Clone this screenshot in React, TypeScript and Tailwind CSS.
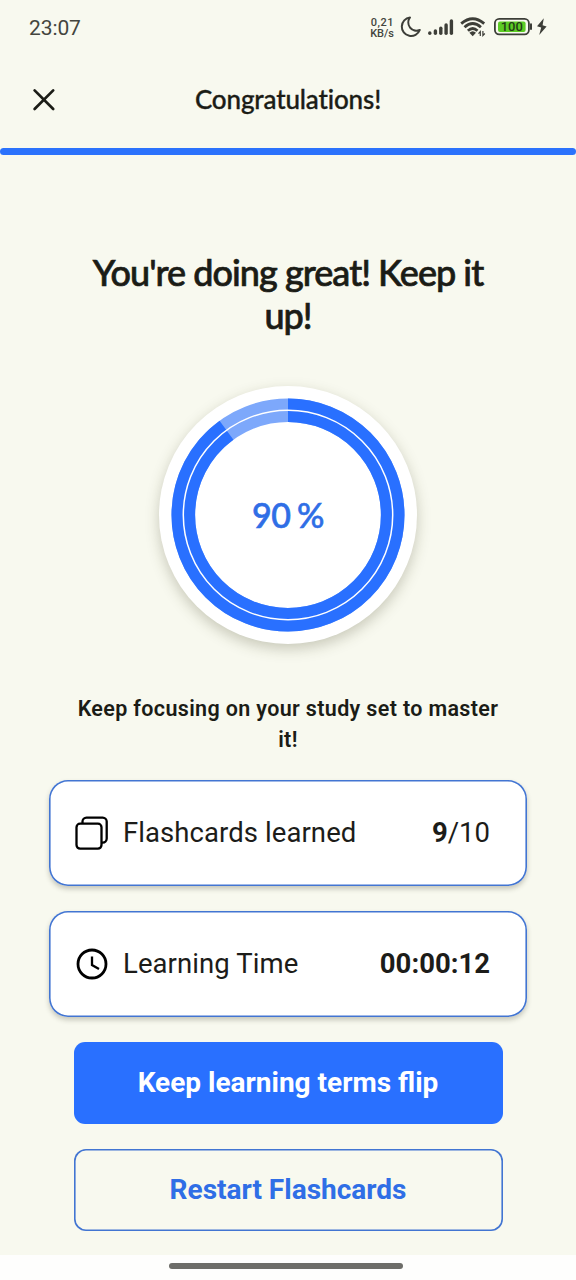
import type { ReactNode } from "react";

function StatusIcons() {
  return (
    <svg width="184" height="30" viewBox="368 12 184 30" fill="none" aria-hidden="true">
      <path
        d="M409.2 17.3 A9.3 9.3 0 1 0 419 29.8 A8.2 8.2 0 0 1 409.2 17.3 Z"
        stroke="#3d3e38"
        strokeWidth="2"
        strokeLinejoin="round"
        transform="translate(0.8 0.2)"
      />
      <g stroke="#3d3e38" strokeWidth="3.4" strokeLinecap="round">
        <path d="M429.8 33V33.2" />
        <path d="M435.4 31V33.2" />
        <path d="M440.8 28.2V33.2" />
        <path d="M446.1 25V33.2" />
        <path d="M451.4 21V33.2" />
      </g>
      <g stroke="#3d3e38" strokeWidth="2.8">
        <path d="M461.2 23.6 Q472.7 13.8 484.2 23.6" />
        <path d="M464.5 27.3 Q472.7 19.8 480.9 27.3" />
        <path d="M467.9 30.7 Q472.7 26.2 477.5 30.7" />
      </g>
      <path d="M469.4 32.8 Q472.7 29.8 476 32.8 L472.7 36.2 Z" fill="#3d3e38" />
      <path d="M480.3 36V31.6L478.5 33.6M482.9 31V35.5L484.8 33.5" stroke="#3d3e38" strokeWidth="1.2" />
      <rect x="494.9" y="18.8" width="34" height="15.6" rx="4.3" stroke="#3d3e38" strokeWidth="1.8" />
      <rect x="498" y="21.4" width="27.6" height="10.6" rx="2" fill="#5ccc24" />
      <path d="M531 24.2V29" stroke="#3d3e38" strokeWidth="2" strokeLinecap="round" />
      <path d="M543.8 18.2 L537 26.2 L541.2 27.6 L539.2 35 L546.6 26.6 L542.6 25.2 Z" fill="#3d3e38" />
      <text
        x="511.8"
        y="31.4"
        textAnchor="middle"
        textLength="22"
        fill="#243c18"
        className="font-['Roboto',sans-serif] text-[13px] font-medium"
      >
        100
      </text>
    </svg>
  );
}

function ScoreRing({ percent }: { percent: number }) {
  return (
    <div className="grid h-[258px] w-[258px] place-items-center rounded-full bg-white shadow-[0_5px_14px_rgba(60,60,30,0.26)]">
      <svg width="258" height="258" viewBox="0 0 258 258" fill="none" className="col-start-1 row-start-1" aria-hidden="true">
        <circle cx="129" cy="129" r="104.7" stroke="#7da8fb" strokeWidth="23.6" />
        <circle
          cx="129"
          cy="129"
          r="104.7"
          stroke="#2970ff"
          strokeWidth="23.6"
          pathLength="100"
          strokeDasharray={`${percent} 100`}
          transform="rotate(-90 129 129)"
        />
        <circle cx="129" cy="129" r="104.7" stroke="#ffffff" strokeWidth="1.5" />
      </svg>
      <span className="col-start-1 row-start-1 font-['Lato',sans-serif] text-[34px] leading-none font-medium tracking-[-0.3px] [word-spacing:-2px] whitespace-nowrap text-[#2f6ee6] [-webkit-text-stroke:0.6px_#2f6ee6]">
        {percent} %
      </span>
    </div>
  );
}

function StatCard({ icon, label, children }: { icon: ReactNode; label: string; children: ReactNode }) {
  return (
    <div className="flex h-[106px] w-[478px] shrink-0 items-center rounded-[19px] bg-white pr-[37px] pl-[26px] text-[27.5px] text-[#1c1c19] shadow-[inset_0_0_0_1.6px_#4275d2,0_3px_5px_rgba(50,50,30,0.25)]">
      {icon}
      <span className="ml-[14px] tracking-[0.08px]">{label}</span>
      <span className="ml-auto">{children}</span>
    </div>
  );
}

export default function App() {
  return (
    <main className="flex h-[1280px] w-[576px] flex-col items-center overflow-hidden bg-[#f8f9ef] font-['Roboto',sans-serif] text-[#1b1c16]">
      <div className="flex h-[54px] w-full shrink-0 items-center pl-[29px] text-[#44453e]">
        <span className="pt-[3px] text-[21px] tracking-[-0.1px]">23:07</span>
        <span className="ml-auto flex flex-col items-end pt-px text-[11px] leading-[11px] font-medium">
          <span className="tracking-[0.5px]">0,21</span>
          <span>KB/s</span>
        </span>
        <div className="mr-6 -ml-[26px]">
          <StatusIcons />
        </div>
      </div>
      <header className="grid h-[94px] w-full shrink-0 grid-cols-[87px_1fr_87px] items-center pb-[2px]">
        <button aria-label="Close" className="flex justify-center">
          <svg width="24" height="24" viewBox="0 0 24 24" fill="none" stroke="#1b1c16" strokeWidth="2.7" strokeLinecap="round">
            <path d="M2.6 2.4L21.2 21M21.2 2.4L2.6 21" />
          </svg>
        </button>
        <h1 className="pb-px text-center font-['Lato',sans-serif] text-[26px] font-medium tracking-[-0.15px] [font-variant-ligatures:none] [-webkit-text-stroke:0.35px_#1b1c16]">
          Congratulations!
        </h1>
      </header>
      <div className="h-[7px] w-full shrink-0 rounded-full bg-[#2b72fc]" />
      <h2 className="mt-[96px] h-[88px] w-[430px] shrink-0 text-center font-['Lato',sans-serif] text-[36px] leading-[43px] font-medium tracking-[-0.98px] [font-variant-ligatures:none] [-webkit-text-stroke:0.7px_#1b1c16]">
        You're doing great! Keep it
        <br />
        up!
      </h2>
      <div className="mt-[47px] shrink-0">
        <ScoreRing percent={90} />
      </div>
      <p className="mt-[49px] h-[63px] shrink-0 text-center text-[21.5px] leading-[31px] font-semibold tracking-[0.35px]">
        Keep focusing on your study set to master
        <br />
        it!
      </p>
      <div className="mt-6 flex shrink-0 flex-col gap-[25px]">
        <StatCard
          label="Flashcards learned"
          icon={
            <svg width="34" height="34" viewBox="0 0 34 34" fill="none" stroke="#000000" strokeWidth="2.3">
              <rect x="1.5" y="7.7" width="25" height="25" rx="3.6" />
              <path d="M7.5 8V5.6a4 4 0 0 1 4-4h16.2a4 4 0 0 1 4 4v17a4 4 0 0 1-4 4h-1.2" />
            </svg>
          }
        >
          <b>9</b>/10
        </StatCard>
        <StatCard
          label="Learning Time"
          icon={
            <svg width="34" height="34" viewBox="0 0 34 34" fill="none" stroke="#000000">
              <circle cx="17" cy="17" r="14" strokeWidth="2.8" />
              <path d="M17 9.5V18L24 22" strokeWidth="2.3" />
            </svg>
          }
        >
          <b>00:00:12</b>
        </StatCard>
      </div>
      <button className="mt-[25px] h-[82px] w-[429px] shrink-0 rounded-[11px] bg-[#2970ff] text-[28px] font-bold text-white">
        Keep learning terms flip
      </button>
      <button className="mt-[25px] h-[82px] w-[429px] shrink-0 rounded-[12px] text-[28px] font-bold text-[#2f6ee6] shadow-[inset_0_0_0_1.6px_#4275d2]">
        Restart Flashcards
      </button>
      <div className="mt-auto flex h-[25px] w-full shrink-0 justify-center bg-[#fefefd] pt-2 pr-[4px]">
        <div className="h-[6px] w-[234px] rounded-full bg-[#6d6d69]" />
      </div>
    </main>
  );
}
